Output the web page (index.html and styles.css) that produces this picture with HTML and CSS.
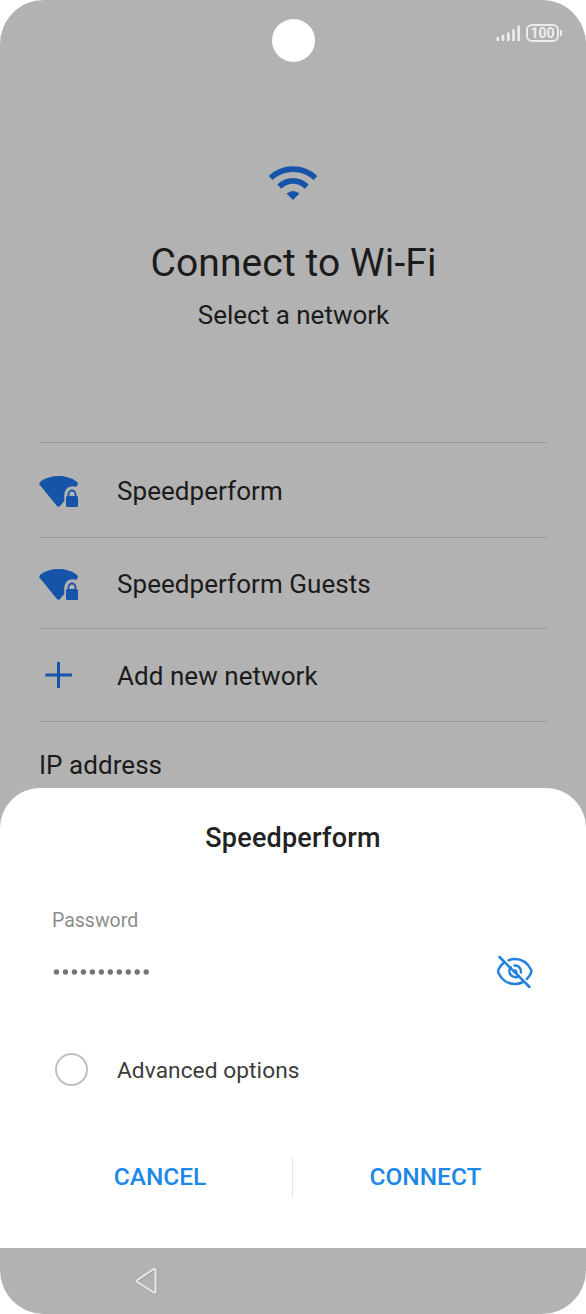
FILE: index.html
```html
<!DOCTYPE html>
<html lang="en">
<head>
<meta charset="utf-8">
<title>Connect to Wi-Fi</title>
<link rel="stylesheet" href="styles.css">
</head>
<body>
<div class="phone">
  <header class="status">
    <span class="camera"></span>
    <svg class="signal" width="26" height="18" viewBox="0 0 26 18"><path d="M1.800 16v-2M7 16v-4M12.300 16V9.500M17.500 16V6.500M22.700 16V2.500" fill="none" stroke="#ececec" stroke-width="2.700" stroke-linecap="round"/></svg>
    <span class="battery">100</span>
  </header>
  <section class="intro">
    <svg class="wifi" width="50" height="36" viewBox="0 0 50 36"><g fill="none" stroke="#1554a8" stroke-width="5.600"><path d="M2.600 13Q12 4.100 25 4.100T47.400 13"/><path d="M11.300 21.600Q17.500 15.900 25 15.900T38.700 21.600"/></g><path d="M18.500 28.500Q25 23.500 31.500 28.500L25 35Z" fill="#1554a8"/></svg>
    <h1 class="title">Connect to Wi-Fi</h1>
    <p class="subtitle">Select a network</p>
  </section>
  <main class="list">
    <div class="row first">
      <svg class="icon" width="40" height="34" viewBox="0 0 40 34"><path d="M.3 9.300Q0 7.500 1.500 6.500Q9 1 19.500 1T37.500 6.500Q39.500 8 38.800 9.300L37.500 11.800C29.500 9.500 25.300 14.500 25.300 20.500L25.300 26L21.500 30.500Q19.500 33 17.500 30.500Z" fill="#1554a8"/><rect x="27" y="21" width="12" height="11" rx="1.500" fill="#1554a8"/><path d="M29.500 22v-3a3.500 3.500 0 0 1 7 0v3" fill="none" stroke="#1554a8" stroke-width="1.800"/></svg>
      <span>Speedperform</span>
    </div>
    <div class="row second">
      <svg class="icon" width="40" height="34" viewBox="0 0 40 34"><path d="M.3 9.300Q0 7.500 1.500 6.500Q9 1 19.500 1T37.500 6.500Q39.500 8 38.800 9.300L37.500 11.800C29.500 9.500 25.300 14.500 25.300 20.500L25.300 26L21.500 30.500Q19.500 33 17.500 30.500Z" fill="#1554a8"/><rect x="27" y="21" width="12" height="11" rx="1.500" fill="#1554a8"/><path d="M29.500 22v-3a3.500 3.500 0 0 1 7 0v3" fill="none" stroke="#1554a8" stroke-width="1.800"/></svg>
      <span>Speedperform Guests</span>
    </div>
    <div class="row third">
      <svg class="icon" width="40" height="34" viewBox="0 0 40 34"><path d="M19.500 4v26M6.500 17h26.500" fill="none" stroke="#1554a8" stroke-width="3"/></svg>
      <span>Add new network</span>
    </div>
    <div class="ip">IP address</div>
  </main>
  <section class="sheet">
    <h2 class="sheet-title">Speedperform</h2>
    <div class="label">Password</div>
    <div class="field">
      <svg class="dots" width="98" height="8" viewBox="0 0 98 8"><path d="M3.500 4H94" fill="none" stroke="#757575" stroke-width="5.400" stroke-linecap="round" stroke-dasharray="0 8.970"/></svg>
      <svg class="eye" width="38" height="34" viewBox="0 0 38 34"><g fill="none" stroke="#2382dc" stroke-width="2.500" stroke-linecap="round"><path d="M12.500 5.300Q15.500 4 19 4C28 4 32 9 35 14.500Q36 16.500 34.500 19Q33 22 30.800 24"/><path d="M8 7.500Q5 10 2.700 14Q1.500 16.500 3 19C6.500 25.500 12 29 19 29Q22.500 29 26 27.500"/><path d="M18.500 10.600A6 6 0 0 1 25 17.500M14.800 12.300A6 6 0 0 0 22.800 21.100M19 15.500a1.800 1.800 0 0 1 1.200 2.300"/><path d="M3.500 2L33.500 32"/></g></svg>
    </div>
    <div class="option"><span class="radio"></span><span>Advanced options</span></div>
    <div class="actions"><button class="cancel">CANCEL</button><span class="split"></span><button class="connect">CONNECT</button></div>
  </section>
  <nav class="navbar">
    <svg class="back" width="26" height="30" viewBox="0 0 26 30"><path d="M20.500 3.700V25.300Q20.500 27.500 18.500 26.300L2.700 16.300Q1 15 2.700 13.700L18.500 3.200Q20.500 2 20.500 4Z" fill="none" stroke="#999" stroke-width="2.400" transform="translate(.6 .8)" opacity=".6"/><path d="M20.500 3.700V25.300Q20.500 27.500 18.500 26.300L2.700 16.300Q1 15 2.700 13.700L18.500 3.200Q20.500 2 20.500 4Z" fill="none" stroke="#e8e8e8" stroke-width="1.900"/></svg>
  </nav>
</div>
</body>
</html>
```
FILE: styles.css
```css
* { box-sizing: border-box; }
body { margin: 0; background: #fff; font-family: Roboto, sans-serif; color: #1b1b1b; }
h1, h2, p { margin: 0; font-weight: 400; }
svg { display: block; flex: none; }
.phone { width: 586px; height: 1314px; background: #b2b2b2; border-radius: 44px; overflow: hidden; display: flex; flex-direction: column; }
.status { height: 165px; flex: none; display: grid; grid-template-columns: 271px 44px 181px 30px 36px; align-items: start; }
.camera { grid-column: 2; width: 43px; height: 43px; margin: 19px 0 0 .5px; border-radius: 50%; background: #fff; }
.signal { grid-column: 4; margin-top: 24px; }
.battery { position: relative; width: 33px; height: 18px; margin-top: 24px; border: 2px solid #ececec; border-radius: 6px; color: #ececec; font-size: 14px; font-weight: 700; line-height: 15px; text-align: center; }
.battery::after { content: ""; position: absolute; right: -5px; top: 4px; width: 2px; height: 6px; border-radius: 1px; background: #ececec; }
.intro { height: 277px; flex: none; display: flex; flex-direction: column; align-items: center; }
.wifi { margin-bottom: 37px; }
.title { font-size: 39px; line-height: 50px; letter-spacing: .1px; padding-left: 1px; }
.subtitle { font-size: 26px; line-height: 32px; margin-top: 11px; letter-spacing: 0; padding-left: 1px; }
.list { height: 346px; flex: none; padding: 0 39px; font-size: 26px; letter-spacing: .05px; }
.row { border-top: 1.500px solid #979797; display: flex; align-items: center; gap: 38px; }
.first { height: 95px; }
.row span { line-height: 32px; }
.first span { margin-top: 1px; }
.first .icon { margin-top: 4px; }
.second { height: 91px; }
.second span { margin-top: 1px; }
.second .icon { margin-top: 3px; }
.third { height: 93px; }
.third span { margin-top: 2px; }
.ip { border-top: 1px solid #979797; padding-top: 27px; line-height: 32px; }
.sheet { height: 460px; flex: none; background: #fff; border-radius: 40px 40px 0 0; padding: 34px 52px 0; }
.sheet-title { font-size: 27px; font-weight: 500; line-height: 32px; letter-spacing: .2px; text-align: center; color: #222; }
.label { margin-top: 55px; font-size: 19.500px; line-height: 24px; color: #8c8c8c; }
.field { height: 36px; margin-top: 21px; display: flex; align-items: center; justify-content: space-between; }
.dots { margin-left: 1px; }
.option { display: flex; align-items: center; gap: 29px; height: 34px; margin-top: 63px; padding-left: 3px; font-size: 22.700px; letter-spacing: .07px; color: #3c3c3c; }
.radio { width: 33px; height: 33px; margin-bottom: 2px; border: 2.500px solid #c0c0c0; border-radius: 50%; }
.actions { display: grid; grid-template-columns: 240px 1px 241px; align-items: center; height: 40px; margin-top: 70px; }
.actions button { border: 0; padding: 0; background: none; font: 500 24.500px/32px Roboto, sans-serif; color: #1e88e5; }
.cancel { transform: translateX(-12px); }
.connect { transform: translateX(12px); }
.split { height: 39px; background: #e3e3e3; }
.navbar { height: 66px; flex: none; padding: 18px 0 0 135px; }
```
